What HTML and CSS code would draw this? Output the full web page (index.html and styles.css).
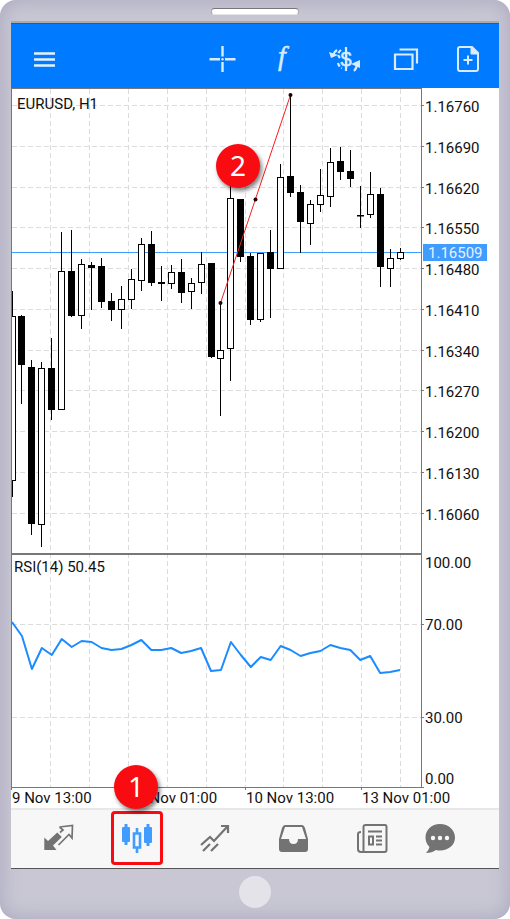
FILE: index.html
```html
<!DOCTYPE html>
<html lang="en">
<head>
    <meta charset="UTF-8">
    <meta name="viewport" content="width=device-width, initial-scale=1.0">
    <title>EURUSD, H1</title>
    <link rel="stylesheet" href="styles.css">
</head>
<body>
    <div class="phone">
        <div class="phone-top">
            <span class="speaker"></span>
        </div>

        <main class="screen">
            <header class="header">
                <button class="icon-button" type="button" aria-label="Menu">
                    <svg width="32" height="32" viewBox="0 0 32 32">
                        <path d="M6 10.500h21M6 16.500h21M6 22.500h21" stroke="#e6f2ff" stroke-width="2.600"/>
                    </svg>
                </button>

                <div class="toolbar">
                    <button class="icon-button" type="button" aria-label="Crosshair">
                        <svg width="32" height="32" viewBox="0 0 32 32">
                            <path d="M16.500 3v10.500M16.500 19V29M3.500 16.300H14M19 16.300h10.500" stroke="#d9ebff" stroke-width="2.400"/>
                            <circle cx="16.500" cy="16.300" r="1.200" fill="#d9ebff"/>
                        </svg>
                    </button>
                    <button class="icon-button" type="button" aria-label="Indicators">
                        <svg width="32" height="32" viewBox="0 0 32 32">
                            <text class="icon-f" x="11" y="22">f</text>
                        </svg>
                    </button>
                    <button class="icon-button" type="button" aria-label="Symbols">
                        <svg width="32" height="32" viewBox="0 0 32 32" fill="none" stroke="#d9ebff" stroke-width="2.200">
                            <text class="icon-dollar" x="17" y="23">$</text>
                            <path d="M17 4v24"/>
                            <path d="M12 7q-5 4-1 8M9 20q1 4 4 5" stroke-dasharray="4 2"/>
                            <path d="M8 7q-3 2-4 5M25 28q3-3 3-7"/>
                            <path d="M0 9l2 6 7-3zM22 21l9-4v8z" fill="#d9ebff" stroke="none"/>
                        </svg>
                    </button>
                    <button class="icon-button" type="button" aria-label="Windows">
                        <svg width="32" height="32" viewBox="0 0 32 32" fill="none" stroke="#d9ebff" stroke-width="2.200">
                            <path d="M5 11.500h17.500v14.500H5z"/>
                            <path d="M9.500 6.500h17.500v14"/>
                        </svg>
                    </button>
                    <button class="icon-button" type="button" aria-label="New order">
                        <svg width="32" height="32" viewBox="0 0 32 32" fill="none" stroke="#d9ebff" stroke-width="2">
                            <path d="M8 4h12l6 6v16q0 2-2 2H8q-2 0-2-2V6q0-2 2-2z"/>
                            <path d="M19 4v7h7z" fill="#d9ebff" stroke-width="1"/>
                            <path d="M16 12.500v9M11.500 17h9"/>
                        </svg>
                    </button>
                </div>
            </header>

            <section class="chart">
                <svg class="chart-svg" viewBox="11 88 488 720" role="img" aria-label="EURUSD chart with RSI">
                    <g id="grid" class="grid"></g>
                    <path class="price-line" d="M12 252.500H421"/>
                    <g id="candles" class="candles"></g>
                    <polyline id="rsi" class="rsi"/>

                    <!-- trend line -->
                    <path class="trend" d="M220.500 303L290.500 95"/>
                    <circle class="trend-dot" cx="220.500" cy="303" r="2"/>
                    <circle class="trend-dot" cx="255.500" cy="199.500" r="2"/>
                    <circle class="trend-dot" cx="290.500" cy="95" r="2"/>

                    <!-- frame -->
                    <path class="frame" d="M11.500 88V787.500H424M421.500 88V787M11 88.500H421"/>
                    <path class="divider" d="M11 554H422"/>
                    <path id="ticks" class="frame"/>

                    <text class="label" x="17" y="109">EURUSD, H1</text>
                    <text class="label" x="14" y="572">RSI(14) 50.45</text>
                    <g id="labels" class="label"></g>

                    <rect class="price-tag" x="423" y="244" width="64" height="17"/>
                    <text class="label label-current" x="428" y="258">1.16509</text>
                </svg>
                <span class="badge badge-chart">2</span>
            </section>

            <nav class="tabs">
                <button class="tab" type="button" aria-label="Quotes">
                    <svg width="32" height="32" viewBox="0 0 32 32">
                        <path d="M1.300 28V15.500L5 19l9.300-8.500 4.500 4.500-8.800 8.500 3.500 4.500z" fill="#737373"/>
                        <path d="M16.500 5L29.500 3.500 29 16l-3-3.500L15.500 23M16.500 5l3.500 3-3 2.500" fill="none" stroke="#737373" stroke-width="1.700"/>
                    </svg>
                </button>
                <button class="tab tab-active" type="button" aria-label="Chart">
                    <svg width="32" height="32" viewBox="0 0 32 32" fill="#409cff">
                        <rect x="1" y="5" width="8" height="15" rx="1"/>
                        <path d="M3.500 2h3v21h-3zM25.500 2h3v22h-3z"/>
                        <rect x="23" y="5" width="8" height="16" rx="1"/>
                        <path d="M13 11.500h6v14h-6zM16 6v5M16 26v5" fill="none" stroke="#409cff" stroke-width="2.600"/>
                    </svg>
                    <span class="badge badge-tab">1</span>
                </button>
                <button class="tab" type="button" aria-label="Trade">
                    <svg width="32" height="32" viewBox="0 0 32 32" fill="none" stroke="#737373" stroke-width="2.200">
                        <path d="M2 23l9-8 4 4L28 5M22 4h7v7"/>
                        <path d="M4 29l7-7M12 29l7-7"/>
                    </svg>
                </button>
                <button class="tab" type="button" aria-label="History">
                    <svg width="32" height="32" viewBox="0 0 32 32">
                        <path d="M8 3h17q2 0 3 3l3 11v10q0 3-3 3H5q-3 0-3-3V17L5 6q1-3 3-3zM8 5L4 17h8q0 5 4.500 5t4.500-5h8L25 5z" fill="#737373" fill-rule="evenodd"/>
                    </svg>
                </button>
                <button class="tab" type="button" aria-label="News">
                    <svg width="32" height="32" viewBox="0 0 32 32" fill="none" stroke="#737373" stroke-width="2">
                        <path d="M10 3h20q1.500 0 1.500 2v23q0 2-2 2H6q-3 0-3-3V12q0-2 3-2M8.500 29V5q0-2 2-2"/>
                        <path d="M13 9.500h14M21 14.500h6M21 18.500h6M21 22.500h6M14 14.500h4v8h-4z"/>
                    </svg>
                </button>
                <button class="tab" type="button" aria-label="Messages">
                    <svg width="32" height="32" viewBox="0 0 32 32">
                        <path d="M16 2C7.500 2 1.500 8 1.500 15.500c0 4 1.500 7 4 9.500Q5 28 2 31q6 0 10-3 2 .5 4 .5c8.500 0 15-5.500 15-13S24.500 2 16 2z" fill="#737373"/>
                        <circle cx="9" cy="16" r="2.200" fill="#f7f7f7"/>
                        <circle cx="16" cy="16" r="2.200" fill="#f7f7f7"/>
                        <circle cx="23" cy="16" r="2.200" fill="#f7f7f7"/>
                    </svg>
                </button>
            </nav>
        </main>

        <div class="phone-bottom">
            <button class="home" type="button" aria-label="Home"></button>
        </div>
    </div>

    <script src="chart.js"></script>
</body>
</html>
```

FILE: styles.css
```css
* {
    margin: 0;
    padding: 0;
    box-sizing: border-box;
}

body {
    background-color: #fff;
    font-family: Roboto, "Liberation Sans", sans-serif;
}

button {
    border: none;
    background: transparent;
    cursor: pointer;
}

svg {
    display: block;
    overflow: visible;
}

/* Phone body */
.phone {
    padding: 0 11px;
    border-radius: 16px;
    background-color: #c8c7d3;
    box-shadow: inset 0 0 20px #a9a7be;
}

.phone-top {
    height: 23px;
    padding-top: 8px;
    border-bottom: 2px solid #aaa9ab;
}

.speaker {
    display: block;
    width: 88px;
    height: 7px;
    margin: 0 auto;
    border: 1px solid #a5a4ae;
    border-top-color: #77767c;
    border-bottom-color: #e4e4ea;
    border-radius: 4px;
    background-color: #fff;
}

.phone-bottom {
    display: flex;
    justify-content: center;
    padding: 7px 0 11px;
}

.home {
    width: 32px;
    height: 32px;
    border-radius: 50%;
    background-color: #e3e3e9;
}

.screen {
    background-color: #fff;
    border-bottom: 1px solid #555;
}

/* Header */
.header {
    display: flex;
    align-items: center;
    justify-content: space-between;
    height: 65px;
    padding: 6px 15px 0 17px;
    background-color: #007aff;
    border-top: 1px solid #3d5673;
}

.toolbar {
    display: flex;
    justify-content: space-between;
    width: 61%;
}

.icon-button {
    width: 32px;
    height: 32px;
}

.icon-f {
    font: italic 28px "Liberation Serif", serif;
    fill: #d9ebff;
    stroke: #d9ebff;
    stroke-width: 0.5;
}

.icon-dollar {
    font: 20px "Liberation Sans", sans-serif;
    text-anchor: middle;
    fill: #d9ebff;
    stroke-width: 0.5;
}

/* Chart */
.chart {
    position: relative;
}

.chart-svg {
    width: 100%;
    height: auto;
}

.grid {
    stroke: #dcdcdc;
    stroke-width: 1;
    stroke-dasharray: 5 3;
}

.price-line {
    stroke: #409cff;
}

.candles {
    fill: #000;
    stroke: #000;
    stroke-width: 1;
}

.candle-up {
    fill: #fff;
}

.rsi {
    fill: none;
    stroke: #1a8cff;
    stroke-width: 2;
    stroke-linejoin: round;
}

.trend {
    stroke: #f02020;
}

.trend-dot {
    fill: #200000;
}

.frame {
    fill: none;
    stroke: #777;
}

.divider {
    stroke: #777;
    stroke-width: 2;
}

.label {
    font-size: 15px;
    fill: #111;
}

.label-current {
    fill: #e6f2ff;
}

.price-tag {
    fill: #409cff;
}

/* Red numbered marks */
.badge {
    position: absolute;
    width: 44px;
    height: 44px;
    border-radius: 50%;
    background-color: #f80c12;
    box-shadow: 2px 3px 4px rgba(0, 0, 0, 0.5);
    color: #fff;
    font: 28px/42px "Noto Sans", "Open Sans", sans-serif;
    text-align: center;
}

.badge-chart {
    top: 56px;
    left: 42%;
}

.badge-tab {
    bottom: 53px;
    left: 0;
}

/* Bottom tabs */
.tabs {
    display: grid;
    grid-template-columns: repeat(5, 13fr) 10fr;
    justify-items: center;
    align-items: center;
    height: 60px;
    padding: 0 29px 2px 9px;
    background-color: #f7f7f7;
    border-top: 2px solid #e8e8e8;
}

.tab {
    position: relative;
    display: flex;
    align-items: center;
    justify-content: center;
    width: 52px;
    height: 54px;
}

.tab-active {
    border: 3px solid #f80c12;
    border-radius: 4px;
}
```

FILE: chart.js
```js
const FIRST_X = 12;
const STEP = 9.95;

// [high, body top, body bottom, low, rising]
const candles = [
    [291, 316, 480, 497, 1], [315, 316, 364, 404, 0], [360, 367, 523, 535, 0], [362, 368, 524, 547, 1],
    [338, 368, 409, 420, 0], [232, 271, 409, 409, 1], [230, 271, 315, 317, 0], [259, 264, 315, 329, 1],
    [262, 265, 267, 310, 0], [258, 266, 301, 308, 0], [293, 301, 309, 321, 0], [286, 299, 309, 329, 1],
    [269, 279, 299, 309, 1], [238, 244, 280, 291, 1], [231, 244, 282, 286, 0], [266, 282, 283, 301, 0],
    [265, 272, 283, 289, 1], [259, 272, 292, 303, 0], [278, 283, 291, 309, 1], [252, 264, 282, 294, 1],
    [263, 263, 356, 358, 0], [303, 350, 358, 416, 1], [186, 198, 348, 381, 1], [199, 199, 256, 262, 0],
    [253, 256, 319, 325, 0], [253, 253, 319, 322, 1], [230, 252, 268, 318, 0], [164, 177, 268, 268, 1],
    [95, 176, 192, 197, 0], [185, 192, 221, 253, 0], [200, 204, 223, 245, 1], [169, 195, 204, 212, 1],
    [148, 162, 196, 207, 1], [147, 161, 171, 180, 0], [150, 171, 178, 187, 0], [186, 215, 215, 228, 0],
    [172, 194, 214, 218, 1], [188, 194, 266, 287, 0], [249, 258, 268, 287, 1], [248, 252, 258, 260, 1]
];

const rsi = [
    622, 636, 669, 648, 655, 639, 647, 641, 642, 648, 650, 649, 645, 640, 650, 650, 648, 653, 651, 648,
    671, 670, 642, 655, 667, 657, 660, 646, 650, 656, 653, 651, 645, 648, 650, 660, 656, 673, 672, 670
];

const prices = ['1.16760', '1.16690', '1.16620', '1.16550', '1.16480', '1.16410',
    '1.16340', '1.16270', '1.16200', '1.16130', '1.16060'];
const levels = [['100.00', 568], ['70.00', 630], ['30.00', 723], ['0.00', 784]];
const times = [['9 Nov 13:00', 11], ['10 Nov 01:00', 128], ['10 Nov 13:00', 245], ['13 Nov 01:00', 361]];

let grid = '';
let labels = '';
let ticks = '';

for (let i = 0; i < 10; i++) {
    const x = Math.round(50 + i * 38.9) + 0.5;
    grid += `<path d="M${x} 89V787"/>`;
}

prices.forEach((price, i) => {
    const y = Math.round(105 + i * 40.75) + 0.5;
    grid += `<path d="M12 ${y}H421"/>`;
    ticks += `M421 ${y}h3`;
    labels += `<text x="425" y="${y + 6}">${price}</text>`;
});

[624.5, 717.5].forEach(y => {
    grid += `<path d="M12 ${y}H421"/>`;
    ticks += `M421 ${y}h3`;
});

levels.forEach(([text, y]) => {
    labels += `<text x="425" y="${y}">${text}</text>`;
});

times.forEach(([text, x]) => {
    labels += `<text x="${x + 1}" y="803">${text}</text>`;
    ticks += `M${x + 0.5} 787v3`;
});

document.getElementById('grid').innerHTML = grid;
document.getElementById('labels').innerHTML = labels;
document.getElementById('ticks').setAttribute('d', ticks);

document.getElementById('candles').innerHTML = candles.map(([high, top, bottom, low, up], i) => {
    const x = Math.floor(FIRST_X + i * STEP) + 0.5;
    // the first candle is cut by the left edge of the plot
    const left = Math.max(x - 3, 11.5);
    return `<path d="M${x} ${high}V${low}"/>` +
        `<rect class="${up ? 'candle-up' : 'candle-down'}" x="${left}" y="${top + 0.5}" ` +
        `width="${x + 3 - left}" height="${Math.max(bottom - top, 0.5)}"/>`;
}).join('');

document.getElementById('rsi').setAttribute('points',
    rsi.map((y, i) => `${FIRST_X + i * STEP},${y}`).join(' '));
```
